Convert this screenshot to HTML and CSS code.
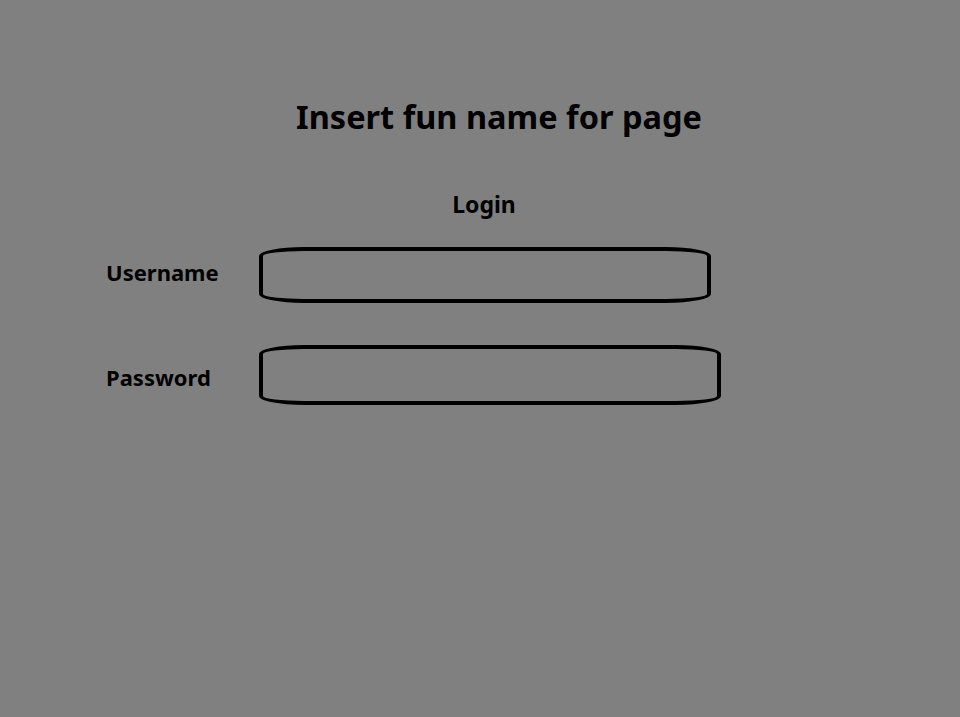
FILE: index.html
```html
<!DOCTYPE html>
<html>
<head>
<meta charset="utf-8">
<link rel="stylesheet" href="styles.css">
</head>
<body>
<main class="page">
  <h1 class="title">Insert fun name for page</h1>
  <h2 class="login">Login</h2>
  <div class="row row-user">
    <label class="label label-user">Username</label>
    <div class="field field-user"></div>
  </div>
  <div class="row row-pass">
    <label class="label label-pass">Password</label>
    <div class="field field-pass"></div>
  </div>
</main>
</body>
</html>
```
FILE: styles.css
```css
html, body {
  margin: 0;
  padding: 0;
  background: #808080;
  height: 100%;
}
body {
  font-family: "Noto Sans", "Open Sans", sans-serif;
  color: #000;
}
.page {
  padding-top: 95px;
  padding-left: 106px;
}
.title {
  margin: 0;
  font-size: 32.5px;
  font-weight: 700;
  line-height: 44px;
  text-align: center;
  width: 786px;
}
.login {
  margin: 50px 0 0 0;
  font-size: 23px;
  font-weight: 700;
  line-height: 30px;
  text-align: center;
  width: 756px;
}
.row {
  display: flex;
  align-items: center;
}
.row-user {
  margin-top: 28px;
}
.row-pass {
  margin-top: 42px;
}
.label {
  width: 153px;
  font-size: 22px;
  font-weight: 700;
}
.label-user {
  padding-bottom: 7px;
}
.label-pass {
  padding-top: 3px;
}
.field {
  box-sizing: border-box;
  border: 4px solid #000;
  border-radius: 45px / 9px;
}
.field-user {
  width: 452px;
  height: 56px;
}
.field-pass {
  width: 462px;
  height: 60px;
}
```
